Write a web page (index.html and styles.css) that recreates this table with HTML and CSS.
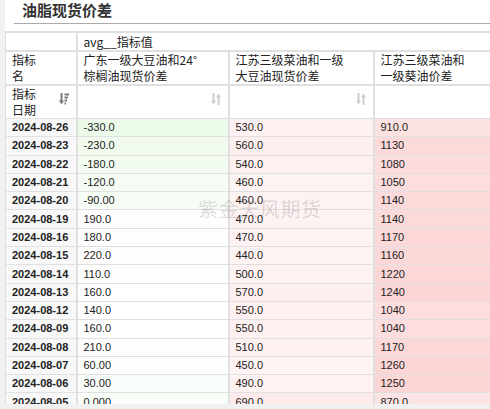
FILE: index.html
```html
<!DOCTYPE html>
<html lang="zh">
<head>
<meta charset="utf-8">
<title>油脂现货价差</title>
<link rel="stylesheet" href="styles.css">
</head>
<body>
<div class="panel">
  <div class="title">油脂现货价差</div>
  <div class="rule"></div>
  <table class="grid">
    <colgroup><col class="c1"><col class="c2"><col class="c3"><col class="c4"></colgroup>
    <thead>
      <tr class="h1"><th></th><th colspan="3">avg__指标值</th></tr>
      <tr class="h2">
        <th>指标<br>名</th>
        <th>广东一级大豆油和24°<br>棕榈油现货价差</th>
        <th>江苏三级菜油和一级<br>大豆油现货价差</th>
        <th>江苏三级菜油和<br>一级葵油价差</th>
      </tr>
      <tr class="h3">
        <th><div class="hcell"><span>指标<br>日期</span>
          <svg class="ico dark" width="10" height="12" viewBox="0 0 10 12"><rect x="1.5" y="0" width="2" height="8.5"/><polygon points="0,7.5 5,7.5 2.5,11.5"/><rect x="5.5" y="0.5" width="4.5" height="2"/><rect x="5.5" y="3.5" width="3.5" height="2"/><rect x="5.5" y="6.5" width="2.5" height="2"/><rect x="5.5" y="9.5" width="1.5" height="2"/></svg>
        </div></th>
        <th><div class="hcell end"><svg class="ico light" width="10" height="12" viewBox="0 0 10 12"><rect x="1.5" y="0" width="2" height="8.5"/><polygon points="0,7.5 5,7.5 2.5,11.5"/><rect x="6.5" y="3.5" width="2" height="8.5"/><polygon points="5,4.5 10,4.5 7.5,0.5"/></svg></div></th>
        <th><div class="hcell end"><svg class="ico light" width="10" height="12" viewBox="0 0 10 12"><rect x="1.5" y="0" width="2" height="8.5"/><polygon points="0,7.5 5,7.5 2.5,11.5"/><rect x="6.5" y="3.5" width="2" height="8.5"/><polygon points="5,4.5 10,4.5 7.5,0.5"/></svg></div></th>
        <th><div class="hcell end"><svg class="ico light" width="10" height="12" viewBox="0 0 10 12"><rect x="1.5" y="0" width="2" height="8.5"/><polygon points="0,7.5 5,7.5 2.5,11.5"/><rect x="6.5" y="3.5" width="2" height="8.5"/><polygon points="5,4.5 10,4.5 7.5,0.5"/></svg></div></th>
      </tr>
    </thead>
    <tbody id="rows"></tbody>
  </table>
  <div class="watermark">紫金天风期货</div>
</div>
<script src="script.js"></script>
</body>
</html>
```
FILE: styles.css
```css
html, body {
  margin: 0;
  padding: 0;
  overflow: hidden;
}
body {
  background: #f1f1f1;
  font-family: "Liberation Sans", Arial, "Noto Sans CJK SC", sans-serif;
  color: #222;
}
.panel {
  position: relative;
  margin-left: 5px;
  width: 600px;
  height: 404px;
  background: #fff;
  overflow: hidden;
}
.title {
  height: 23px;
  padding-left: 17px;
  font-family: "Noto Sans CJK SC", sans-serif;
  font-weight: 700;
  font-size: 15px;
  line-height: 19px;
  color: #333;
}
.rule {
  margin-left: 9px;
  border-top: 1px solid #aaa;
}
.grid {
  margin-top: 7px;
  border-collapse: collapse;
  table-layout: fixed;
  width: 518px;
}
.c1 { width: 71px; }
.c2 { width: 152px; }
.c3 { width: 145px; }
.c4 { width: 150px; }
.grid th {
  border: 1px solid #e0e0e0;
  border-width: 2px 2px 1px 1px;
  padding: 0 6px;
  text-align: left;
  font-family: "Noto Sans CJK SC", sans-serif;
  font-weight: 400;
  font-size: 12px;
  line-height: 16px;
  color: #222;
  background: #fff;
  white-space: nowrap;
  vertical-align: middle;
}
.grid th:first-child { border-left-width: 1px; }
.h1 th { height: 17px; }
.h2 th { height: 32px; }
.h3 th { height: 32px; }
.hcell {
  display: flex;
  align-items: center;
  justify-content: space-between;
}
.hcell.end {
  justify-content: flex-end;
  height: 32px;
}
.ico {
  flex: none;
  margin-bottom: 6px;
  margin-right: 1px;
}
.ico.dark { fill: #7a7a7a; }
.ico.light { fill: #cdcdcd; }
.grid td {
  border: 1px solid #e0e0e0;
  border-width: 1px 2px 1px 1px;
  padding: 0 6px;
  height: 17.3px;
  font-size: 11px;
  line-height: 13px;
  color: #222;
  white-space: nowrap;
  vertical-align: middle;
}
.grid td.date {
  font-weight: 700;
  background: #f8f8f8;
  border-left-width: 1px;
}
.watermark {
  position: absolute;
  left: 193px;
  top: 194px;
  font-family: "Noto Sans CJK SC", sans-serif;
  font-size: 20px;
  letter-spacing: 0.6px;
  color: rgba(0, 0, 0, 0.14);
  pointer-events: none;
  white-space: nowrap;
}
```
FILE: script.js
```js
(function () {
  var data = [
    ["2024-08-26", "-330.0", "530.0", "910.0"],
    ["2024-08-23", "-230.0", "560.0", "1130"],
    ["2024-08-22", "-180.0", "540.0", "1080"],
    ["2024-08-21", "-120.0", "460.0", "1050"],
    ["2024-08-20", "-90.00", "460.0", "1140"],
    ["2024-08-19", "190.0", "470.0", "1140"],
    ["2024-08-16", "180.0", "470.0", "1170"],
    ["2024-08-15", "220.0", "440.0", "1160"],
    ["2024-08-14", "110.0", "500.0", "1220"],
    ["2024-08-13", "160.0", "570.0", "1240"],
    ["2024-08-12", "140.0", "550.0", "1040"],
    ["2024-08-09", "160.0", "550.0", "1040"],
    ["2024-08-08", "210.0", "510.0", "1170"],
    ["2024-08-07", "60.00", "450.0", "1260"],
    ["2024-08-06", "30.00", "490.0", "1250"],
    ["2024-08-05", "0.000", "690.0", "870.0"]
  ];
  var mid = 150;
  function bg(v) {
    var r, g, b, t;
    if (v < mid) {
      t = Math.min(1, (mid - v) / 480);
      r = 255 - 19 * t; g = 255 - 5 * t; b = 255 - 21 * t;
    } else {
      t = Math.min(1, (v - mid) / 1110);
      r = 255 - 3 * t; g = 255 - 42 * t; b = g;
    }
    return "rgb(" + Math.round(r) + "," + Math.round(g) + "," + Math.round(b) + ")";
  }
  var tbody = document.getElementById("rows");
  data.forEach(function (row) {
    var tr = document.createElement("tr");
    var d = document.createElement("td");
    d.className = "date";
    d.textContent = row[0];
    tr.appendChild(d);
    for (var i = 1; i < row.length; i++) {
      var td = document.createElement("td");
      td.textContent = row[i];
      td.style.background = bg(parseFloat(row[i]));
      tr.appendChild(td);
    }
    tbody.appendChild(tr);
  });
})();
```
